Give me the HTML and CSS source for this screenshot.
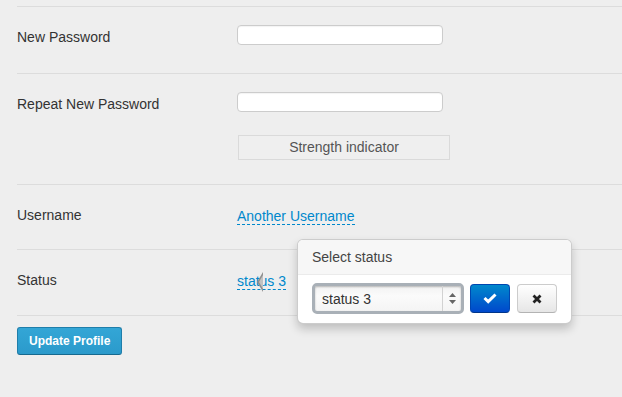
FILE: index.html
```html
<!DOCTYPE html>
<html lang="en">
<head>
    <meta charset="UTF-8">
    <meta name="viewport" content="width=device-width, initial-scale=1.0">
    <title>Profile</title>
    <link rel="stylesheet" href="styles.css">
</head>
<body>
    <form class="profile">
        <div class="row">
            <label class="label" for="pass1">New Password</label>
            <div class="controls">
                <input type="password" id="pass1" class="input">
            </div>
        </div>

        <div class="row">
            <label class="label" for="pass2">Repeat New Password</label>
            <div class="controls">
                <input type="password" id="pass2" class="input input-repeat">
                <div class="strength">Strength indicator</div>
            </div>
        </div>

        <div class="row">
            <div class="label">Username</div>
            <div class="controls static">
                <a href="#" class="editable">Another Username</a>
            </div>
        </div>

        <!-- STATUS + POPOVER -->
        <div class="row row-status">
            <div class="label">Status</div>
            <div class="controls static">
                <a href="#" class="editable">status 3</a>
            </div>

            <div class="popover">
                <div class="arrow"></div>
                <div class="popover-title">Select status</div>
                <div class="popover-content">
                    <div class="select-box">
                        <select class="select">
                            <option>status 1</option>
                            <option>status 2</option>
                            <option selected>status 3</option>
                        </select>
                        <span class="stepper">
                            <svg width="7" height="11" viewBox="0 0 7 11"><path d="M3.5 0 L7 4 L0 4 Z M3.5 11 L7 7 L0 7 Z" fill="#666"/></svg>
                        </span>
                    </div>
                    <button type="button" class="btn btn-ok">
                        <svg width="14" height="11" viewBox="0 0 14 11"><path d="M1.5 5 L5.2 8.6 L12.5 1.5" fill="none" stroke="#fff" stroke-width="3"/></svg>
                    </button>
                    <button type="button" class="btn btn-cancel">
                        <svg width="10" height="10" viewBox="0 0 10 10"><path d="M1.5 1.5 L8.5 8.5 M8.5 1.5 L1.5 8.5" fill="none" stroke="#222" stroke-width="2.8"/></svg>
                    </button>
                </div>
            </div>
        </div>

        <div class="actions">
            <button type="submit" class="btn-update">Update Profile</button>
        </div>
    </form>
</body>
</html>
```

FILE: styles.css
```css
body {
    margin: 0;
    font-family: "Liberation Sans", Arial, Helvetica, sans-serif;
    font-size: 14px;
    line-height: 20px;
    color: #333;
    background-color: #eeeeee;
}
.profile {
    padding: 6px 0 0 17px;
}
.row {
    display: flex;
    border-top: 1px solid #dcdcdc;
    padding: 18px 0;
}
.row-status {
    position: relative;
    padding-bottom: 19px;
}
.label {
    width: 220px;
    padding-top: 2px;
    color: #333;
}
.input {
    display: block;
    box-sizing: border-box;
    width: 206px;
    height: 20px;
    margin: 0 0 10px 0;
    border: 1px solid #cccccc;
    border-radius: 4px;
    background-color: #fff;
    box-shadow: inset 0 1px 1px rgba(0, 0, 0, 0.05);
}
.input-repeat {
    margin-bottom: 23px;
}
.strength {
    box-sizing: border-box;
    width: 212px;
    height: 25px;
    margin: 0 0 6px 1px;
    border: 1px solid #dadada;
    background-color: #efefef;
    color: #555;
    font-size: 14px;
    line-height: 23px;
    text-align: center;
}
.static {
    height: 25px;
    padding-top: 3px;
}
.editable {
    font-size: 14px;
    color: #0088cc;
    text-decoration: none;
    border-bottom: 1px dashed #0088cc;
}

/* popover */
.popover {
    position: absolute;
    top: -11px;
    left: 280px;
    z-index: 2;
    background-color: #fff;
    border: 1px solid rgba(0, 0, 0, 0.2);
    border-radius: 6px;
    box-shadow: 0 5px 10px rgba(0, 0, 0, 0.2);
}
.arrow {
    position: absolute;
    left: -41px;
    top: 32px;
    width: 0;
    height: 0;
    border-top: 10px solid transparent;
    border-bottom: 10px solid transparent;
    border-right: 6px solid #8f8f8f;
}
.arrow::after {
    content: "";
    position: absolute;
    left: 2px;
    top: -7px;
    border-top: 7px solid transparent;
    border-bottom: 7px solid transparent;
    border-right: 4px solid #c2c2c2;
}
.popover-title {
    padding: 8px 14px;
    line-height: 18px;
    font-size: 14px;
    color: #444;
    background-color: #f7f7f7;
    border-bottom: 1px solid #ebebeb;
    border-radius: 5px 5px 0 0;
}
.popover-content {
    display: flex;
    align-items: center;
    padding: 8px 14px 9px 14px;
}
.select-box {
    box-sizing: border-box;
    display: flex;
    width: 152px;
    height: 31px;
    border: 3px solid #a9b0b7;
    border-radius: 5px;
    background: linear-gradient(#f2f2f2, #fbfbfb 40%, #f4f4f4);
    box-shadow: inset 0 1px 2px rgba(0, 0, 0, 0.25);
}
.select {
    flex: 1;
    -webkit-appearance: none;
    appearance: none;
    border: none;
    outline: none;
    background: transparent;
    padding: 0 0 0 7px;
    font-family: "Liberation Sans", Arial, Helvetica, sans-serif;
    font-size: 14px;
    color: #333;
}
.stepper {
    display: flex;
    align-items: center;
    justify-content: center;
    width: 18px;
    border-left: 1px solid #d2d2d2;
}
.btn {
    display: flex;
    align-items: center;
    justify-content: center;
    box-sizing: border-box;
    width: 40px;
    height: 29px;
    padding: 0;
    border-radius: 4px;
    cursor: pointer;
}
.btn-ok {
    margin-left: 6px;
    background: linear-gradient(#0088cc, #0048cc);
    border: 1px solid #0046b0;
    border-bottom-color: #00358a;
}
.btn-cancel {
    margin-left: 7px;
    background: linear-gradient(#ffffff, #e6e6e6);
    border: 1px solid #cccccc;
    border-bottom-color: #b3b3b3;
}

.actions {
    border-top: 1px solid #dcdcdc;
    padding-top: 11px;
}
.btn-update {
    height: 28px;
    padding: 0 11px;
    font-family: "Liberation Sans", Arial, Helvetica, sans-serif;
    font-size: 12px;
    font-weight: bold;
    color: #fff;
    background: linear-gradient(#33a6d6, #2b9acb);
    border: 1px solid #1f7eaa;
    border-bottom-color: #16698f;
    border-radius: 3px;
    cursor: pointer;
}
```
